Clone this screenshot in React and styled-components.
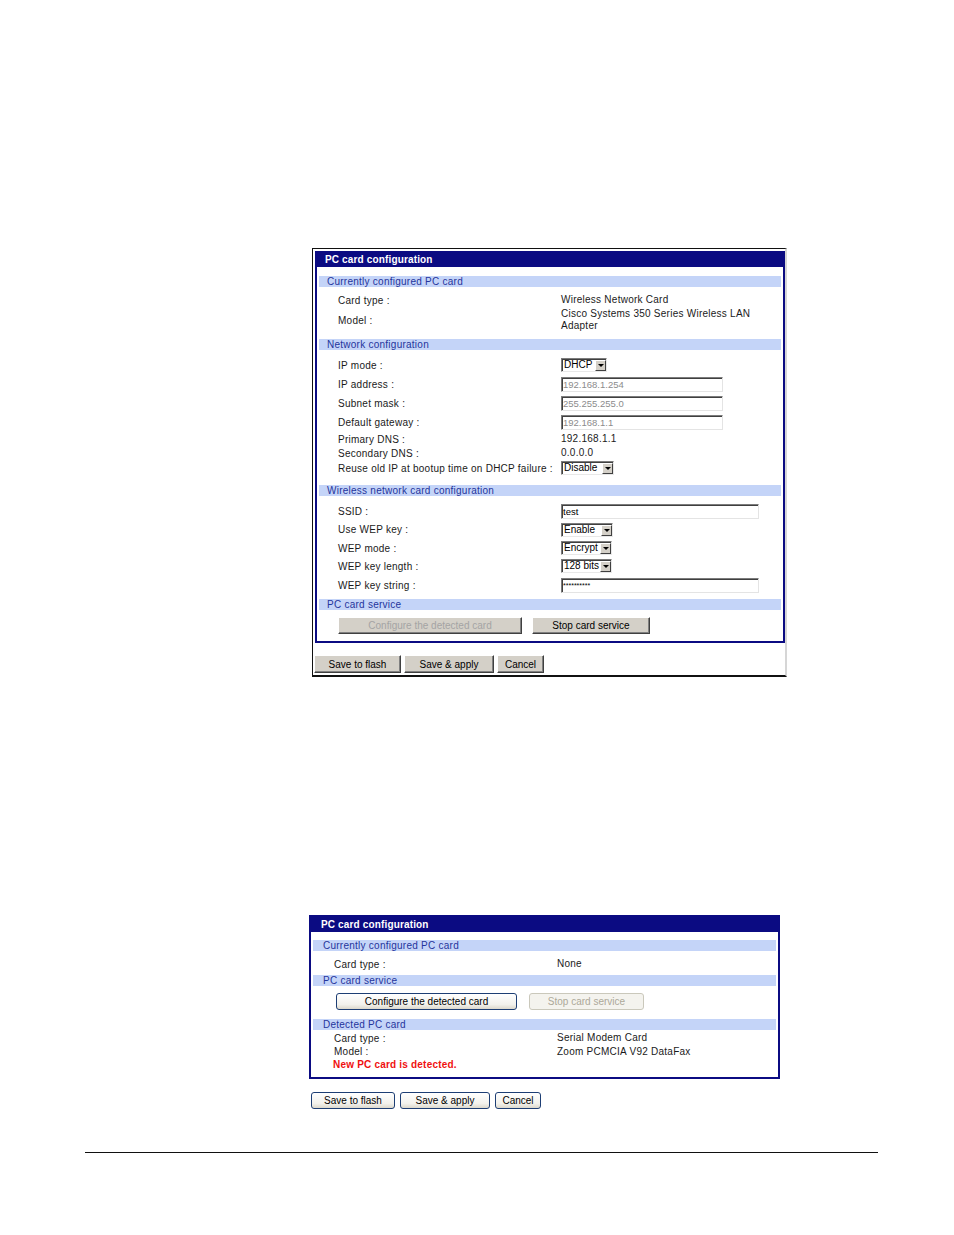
import React from 'react';
import styled, { createGlobalStyle } from 'styled-components';

const GlobalStyle = createGlobalStyle`
  html, body {
    margin: 0;
    padding: 0;
    background: #ffffff;
  }
  body {
    font-family: "Liberation Sans", Arial, sans-serif;
  }
`;

const Page = styled.div`
  width: 954px;
  height: 1235px;
  box-sizing: border-box;
  padding-top: 248px;
  background: #ffffff;
  overflow: hidden;
`;

const ShotFrame = styled.div`
  margin-left: 312px;
  width: 475px;
  box-sizing: border-box;
  border-top: 1px solid #111;
  border-left: 1px solid #111;
  border-right: 2px solid #d6d6d6;
  border-bottom: 2px solid #111;
  padding: 2px 0 2px 0;
`;

const Panel = styled.div`
  width: ${(p) => p.$w}px;
  box-sizing: border-box;
  border: 2px solid #0b0b82;
  margin-left: ${(p) => p.$ml || 0}px;
  margin-top: ${(p) => p.$mt || 0}px;
  background: #ffffff;
`;

const PanelHead = styled.div`
  height: ${(p) => p.$h}px;
  line-height: ${(p) => p.$h}px;
  background: #0b0b82;
  color: #ffffff;
  font-size: 10px;
  font-weight: bold;
  letter-spacing: 0.15px;
  padding-left: ${(p) => p.$pad}px;
`;

const PanelBody = styled.div`
  padding: 0 2px ${(p) => p.$pb}px 2px;
`;

const Bar = styled.div`
  margin-top: ${(p) => p.$mt}px;
  height: 11px;
  line-height: 11px;
  background: #c4d4f8;
  color: #24359c;
  font-size: 10px;
  letter-spacing: 0.25px;
  padding-left: ${(p) => p.$pad || 8}px;
  white-space: nowrap;
`;

const Row = styled.div`
  display: grid;
  grid-template-columns: 223px 1fr;
  align-items: center;
  height: ${(p) => p.$h}px;
  margin-top: ${(p) => p.$mt || 0}px;
  padding-left: ${(p) => p.$pl || 19}px;
  font-size: 10px;
  letter-spacing: 0.25px;
  color: #1a1a1a;
  white-space: nowrap;
`;

const Label = styled.span``;

const Value = styled.span`
  line-height: 12px;
`;

const Alert = styled.div`
  height: ${(p) => p.$h}px;
  line-height: ${(p) => p.$h}px;
  padding-left: 20px;
  font-size: 10px;
  font-weight: bold;
  letter-spacing: 0.2px;
  color: #f01010;
`;

const TextField = styled.input`
  width: ${(p) => p.$w}px;
  height: 15px;
  box-sizing: border-box;
  margin: 0;
  padding: 0 1px;
  border-style: solid;
  border-width: 1px;
  border-color: #7c7c7c #e4e4e4 #e4e4e4 #7c7c7c;
  box-shadow: inset 1px 1px 0 #404040;
  background: #ffffff;
  font-family: "Liberation Sans", Arial, sans-serif;
  font-size: ${(p) => (p.$small ? 7 : 9.5)}px;
  color: ${(p) => (p.$dim ? '#8c8c8c' : '#000000')};
  line-height: 13px;
  outline: none;
`;

const SelectBox = styled.div`
  display: inline-flex;
  align-items: stretch;
  width: ${(p) => p.$w}px;
  height: 14px;
  box-sizing: border-box;
  border-style: solid;
  border-width: 1px;
  border-color: #7c7c7c #e8e8e8 #e8e8e8 #7c7c7c;
  box-shadow: inset 1px 1px 0 #404040;
  background: #ffffff;
`;

const SelectText = styled.span`
  flex: 1;
  padding-left: 2px;
  font-size: 10px;
  line-height: 12px;
  color: #000;
  letter-spacing: 0;
  overflow: hidden;
`;

const SelectArrow = styled.span`
  width: 11px;
  box-sizing: border-box;
  margin: 1px 0 0 0;
  background: #d4d0c8;
  border-style: solid;
  border-width: 1px;
  border-color: #ffffff #404040 #404040 #ffffff;
  display: flex;
  align-items: center;
  justify-content: center;

  &::after {
    content: '';
    width: 0;
    height: 0;
    border-left: 3px solid transparent;
    border-right: 3px solid transparent;
    border-top: 3px solid #000;
  }
`;

const ButtonRow = styled.div`
  display: flex;
  gap: ${(p) => p.$gap}px;
  margin-top: ${(p) => p.$mt}px;
  padding-left: ${(p) => p.$pl}px;
`;

const ClassicButton = styled.button`
  width: ${(p) => p.$w}px;
  height: ${(p) => p.$h}px;
  box-sizing: border-box;
  margin: 0;
  padding: 0;
  background: #d4d0c8;
  border-style: solid;
  border-width: 1px;
  border-color: #ffffff #404040 #404040 #ffffff;
  box-shadow: inset -1px -1px 0 #808080;
  font-family: "Liberation Sans", Arial, sans-serif;
  font-size: 10px;
  color: ${(p) => (p.disabled ? '#a4a4a4' : '#000000')};
  cursor: default;
`;

const XpButton = styled.button`
  width: ${(p) => p.$w}px;
  height: ${(p) => p.$h}px;
  box-sizing: border-box;
  margin: 0;
  padding: 0;
  border-radius: 3px;
  border: 1px solid ${(p) => (p.disabled ? '#cac8bb' : '#1d3e74')};
  background: ${(p) =>
    p.disabled ? '#f4f3ee' : 'linear-gradient(#ffffff, #f2f1ec 70%, #dcd8cc)'};
  font-family: "Liberation Sans", Arial, sans-serif;
  font-size: 10px;
  color: ${(p) => (p.disabled ? '#aca899' : '#000000')};
  cursor: default;
`;

const FooterRule = styled.div`
  margin-top: 43px;
  margin-left: 85px;
  width: 793px;
  height: 1px;
  background: #111;
`;

const Select = ({ w, value }) => (
  <SelectBox $w={w}>
    <SelectText>{value}</SelectText>
    <SelectArrow />
  </SelectBox>
);

const WirelessShot = () => (
  <ShotFrame>
    <Panel $w={470} $ml={2}>
      <PanelHead $h={14} $pad={8}>PC card configuration</PanelHead>
      <PanelBody $pb={7}>
        <Bar $mt={9}>Currently configured PC card</Bar>
        <Row $h={16} $mt={5}>
          <Label>Card type :</Label>
          <Value>Wireless Network Card</Value>
        </Row>
        <Row $h={24}>
          <Label>Model :</Label>
          <Value>
            Cisco Systems 350 Series Wireless LAN
            <br />
            Adapter
          </Value>
        </Row>

        <Bar $mt={7}>Network configuration</Bar>
        <Row $h={20} $mt={5}>
          <Label>IP mode :</Label>
          <Value><Select w={46} value="DHCP" /></Value>
        </Row>
        <Row $h={19}>
          <Label>IP address :</Label>
          <Value><TextField $w={162} $dim readOnly value="192.168.1.254" /></Value>
        </Row>
        <Row $h={19}>
          <Label>Subnet mask :</Label>
          <Value><TextField $w={162} $dim readOnly value="255.255.255.0" /></Value>
        </Row>
        <Row $h={19}>
          <Label>Default gateway :</Label>
          <Value><TextField $w={162} $dim readOnly value="192.168.1.1" /></Value>
        </Row>
        <Row $h={14}>
          <Label>Primary DNS :</Label>
          <Value>192.168.1.1</Value>
        </Row>
        <Row $h={14}>
          <Label>Secondary DNS :</Label>
          <Value>0.0.0.0</Value>
        </Row>
        <Row $h={16}>
          <Label>Reuse old IP at bootup time on DHCP failure :</Label>
          <Value><Select w={53} value="Disable" /></Value>
        </Row>

        <Bar $mt={9}>Wireless network card configuration</Bar>
        <Row $h={18} $mt={6}>
          <Label>SSID :</Label>
          <Value><TextField $w={198} readOnly value="test" /></Value>
        </Row>
        <Row $h={19}>
          <Label>Use WEP key :</Label>
          <Value><Select w={52} value="Enable" /></Value>
        </Row>
        <Row $h={18}>
          <Label>WEP mode :</Label>
          <Value><Select w={51} value="Encrypt" /></Value>
        </Row>
        <Row $h={18}>
          <Label>WEP key length :</Label>
          <Value><Select w={51} value="128 bits" /></Value>
        </Row>
        <Row $h={20}>
          <Label>WEP key string :</Label>
          <Value><TextField $w={198} $small readOnly value="**********" /></Value>
        </Row>

        <Bar $mt={4}>PC card service</Bar>
        <ButtonRow $mt={7} $pl={19} $gap={10}>
          <ClassicButton $w={184} $h={17} disabled>Configure the detected card</ClassicButton>
          <ClassicButton $w={118} $h={17}>Stop card service</ClassicButton>
        </ButtonRow>
      </PanelBody>
    </Panel>
    <ButtonRow $mt={12} $pl={1} $gap={3}>
      <ClassicButton $w={87} $h={18}>Save to flash</ClassicButton>
      <ClassicButton $w={90} $h={18}>Save &amp; apply</ClassicButton>
      <ClassicButton $w={47} $h={18}>Cancel</ClassicButton>
    </ButtonRow>
  </ShotFrame>
);

const DetectedShot = () => (
  <>
    <Panel $w={471} $ml={309} $mt={238}>
      <PanelHead $h={15} $pad={10}>PC card configuration</PanelHead>
      <PanelBody $pb={6}>
        <Bar $mt={8} $pad={10}>Currently configured PC card</Bar>
        <Row $h={16} $mt={5} $pl={21}>
          <Label>Card type :</Label>
          <Value>None</Value>
        </Row>
        <Bar $mt={3} $pad={10}>PC card service</Bar>
        <ButtonRow $mt={7} $pl={23} $gap={12}>
          <XpButton $w={181} $h={17}>Configure the detected card</XpButton>
          <XpButton $w={115} $h={17} disabled>Stop card service</XpButton>
        </ButtonRow>
        <Bar $mt={9} $pad={10}>Detected PC card</Bar>
        <Row $h={14} $mt={1} $pl={21}>
          <Label>Card type :</Label>
          <Value>Serial Modem Card</Value>
        </Row>
        <Row $h={13} $pl={21}>
          <Label>Model :</Label>
          <Value>Zoom PCMCIA V92 DataFax</Value>
        </Row>
        <Alert $h={13}>New PC card is detected.</Alert>
      </PanelBody>
    </Panel>
    <ButtonRow $mt={13} $pl={311} $gap={5}>
      <XpButton $w={84} $h={17}>Save to flash</XpButton>
      <XpButton $w={90} $h={17}>Save &amp; apply</XpButton>
      <XpButton $w={46} $h={17}>Cancel</XpButton>
    </ButtonRow>
  </>
);

const App = () => (
  <>
    <GlobalStyle />
    <Page>
      <WirelessShot />
      <DetectedShot />
      <FooterRule />
    </Page>
  </>
);

export default App;
